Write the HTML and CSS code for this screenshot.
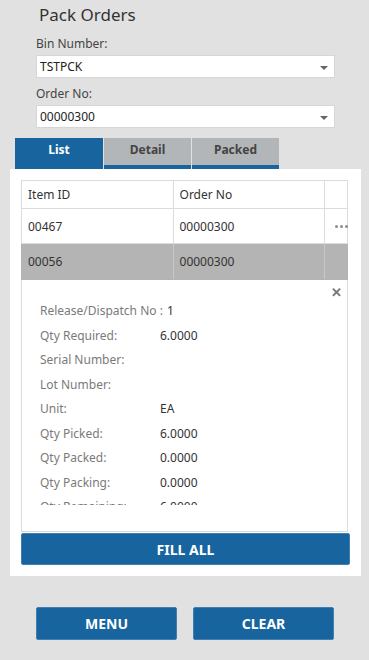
FILE: index.html
```html
<!DOCTYPE html>
<html lang="en">
<head>
  <meta charset="UTF-8" />
  <meta name="viewport" content="width=device-width, initial-scale=1.0"/>
  <title>Pack Orders</title>
  <link rel="stylesheet" href="styles.css">
</head>
<body>
  <h1 class="title">Pack Orders</h1>

  <div class="field">
    <label>Bin Number:</label>
    <div class="select">TSTPCK<span class="caret"></span></div>
  </div>
  <div class="field">
    <label>Order No:</label>
    <div class="select">00000300<span class="caret"></span></div>
  </div>

  <div class="tabs">
    <div class="tab active">List</div>
    <div class="tab">Detail</div>
    <div class="tab">Packed</div>
  </div>

  <div class="panel">
    <div class="grid">
      <div class="grid-row head">
        <div class="cell">Item ID</div>
        <div class="cell">Order No</div>
        <div class="cell last"></div>
      </div>
      <div class="grid-row">
        <div class="cell">00467</div>
        <div class="cell">00000300</div>
        <div class="cell last"><span class="dots"><i></i><i></i><i></i></span></div>
      </div>
      <div class="grid-row selected">
        <div class="cell">00056</div>
        <div class="cell">00000300</div>
        <div class="cell last"></div>
      </div>
    </div>

    <div class="detail">
      <span class="close">&#x2715;</span>
      <div class="detail-scroll">
        <div class="drow first"><span class="dlabel">Release/Dispatch No :</span><span class="dval">1</span></div>
        <div class="drow"><span class="dlabel">Qty Required:</span><span class="dval">6.0000</span></div>
        <div class="drow"><span class="dlabel">Serial Number:</span><span class="dval"></span></div>
        <div class="drow"><span class="dlabel">Lot Number:</span><span class="dval"></span></div>
        <div class="drow"><span class="dlabel">Unit:</span><span class="dval">EA</span></div>
        <div class="drow"><span class="dlabel">Qty Picked:</span><span class="dval">6.0000</span></div>
        <div class="drow"><span class="dlabel">Qty Packed:</span><span class="dval">0.0000</span></div>
        <div class="drow"><span class="dlabel">Qty Packing:</span><span class="dval">0.0000</span></div>
        <div class="drow"><span class="dlabel">Qty Remaining:</span><span class="dval">6.0000</span></div>
      </div>
    </div>

    <button class="btn wide">FILL ALL</button>
  </div>

  <div class="actions">
    <button class="btn">MENU</button>
    <button class="btn">CLEAR</button>
  </div>
</body>
</html>
```

FILE: styles.css
```css
:root {
  --blue: #17649f;
  --bg: #e1e1e1;
  --line: #dcdcdc;
  --text: #333;
  --muted: #7a7a7a;
}

body {
  margin: 0;
  background: var(--bg);
  color: var(--text);
  font-family: 'Noto Sans', 'Open Sans', sans-serif;
  font-size: 12px;
}

.title {
  margin: 0;
  padding: 2px 0 0 39px;
  font-size: 17px;
  font-weight: normal;
  line-height: 26px;
  color: #333;
}

.field {
  margin: 0 34px 0 36px;
}

.field label {
  display: block;
  padding-top: 7px;
  height: 20px;
  line-height: 18px;
  color: #444;
}

.select {
  display: flex;
  align-items: center;
  justify-content: space-between;
  height: 23px;
  padding: 0 6px 0 3px;
  background: white;
  border: 1px solid #d6d6d6;
  box-sizing: border-box;
  font-size: 12px;
  color: #222;
}

.caret {
  width: 0;
  height: 0;
  border-left: 4px solid transparent;
  border-right: 4px solid transparent;
  border-top: 4px solid #666;
  margin-top: 2px;
}

.tabs {
  display: flex;
  gap: 1px;
  margin: 10px 0 0 15px;
}

.tab {
  width: 88px;
  height: 31px;
  box-sizing: border-box;
  padding-top: 3px;
  background: #b3b6b9;
  border-bottom: 4px solid var(--blue);
  text-align: center;
  font-weight: bold;
  color: #444;
  font-size: 12px;
}

.tab + .tab {
  width: 87px;
}

.tab.active {
  background: var(--blue);
  color: white;
}

.panel {
  margin: 0 8px 0 10px;
  padding: 11px;
  background: white;
}

.grid {
  width: 327px;
}

.grid-row {
  display: flex;
  height: 35px;
  border-bottom: 1px solid var(--line);
  border-left: 1px solid var(--line);
  border-right: 1px solid var(--line);
  box-sizing: border-box;
}

.grid-row.head {
  height: 29px;
  border-top: 1px solid var(--line);
  color: #444;
}

.grid-row.selected {
  height: 36px;
  background: #b4b4b4;
  border-color: #b4b4b4;
}

.cell {
  width: 152px;
  padding-left: 6px;
  box-sizing: border-box;
  display: flex;
  align-items: center;
  border-right: 1px solid var(--line);
  color: #333;
}

.selected .cell {
  border-right-color: #c8c8c8;
}

.cell.last {
  width: 22px;
  border-right: none;
}

.grid-row.selected .cell.last {
  border-left: 1px solid #c8c8c8;
  margin-left: -1px;
  width: 23px;
}

.dots {
  display: flex;
  gap: 2px;
  margin-left: 4px;
}

.dots i {
  width: 3px;
  height: 3px;
  border-radius: 50%;
  background: #8c8c8c;
}

.detail {
  position: relative;
  height: 252px;
  border: 1px solid var(--line);
  border-top: none;
  box-sizing: border-box;
  width: 327px;
  padding: 19px 0 0 18px;
}

.close {
  position: absolute;
  right: 5px;
  top: 3px;
  font-size: 13px;
  color: #777;
  font-weight: bold;
}

.detail-scroll {
  height: 206px;
  overflow: hidden;
}

.drow {
  display: flex;
  height: 24.5px;
  line-height: 24.5px;
}

.dlabel {
  width: 120px;
  color: var(--muted);
}

.dval {
  color: #333;
}

.drow.first .dlabel {
  width: auto;
  margin-right: 4px;
}

.btn {
  display: block;
  height: 33px;
  background: var(--blue);
  color: white;
  border: 1px solid #3f7fb3;
  border-radius: 2px;
  font-family: 'Noto Sans', 'Open Sans', sans-serif;
  font-size: 14px;
  font-weight: bold;
  cursor: pointer;
}

.btn.wide {
  width: 329px;
  height: 32px;
  margin-top: 1px;
}

.actions {
  display: flex;
  gap: 16px;
  margin: 31px 0 0 36px;
}

.actions .btn {
  width: 141px;
}
```
